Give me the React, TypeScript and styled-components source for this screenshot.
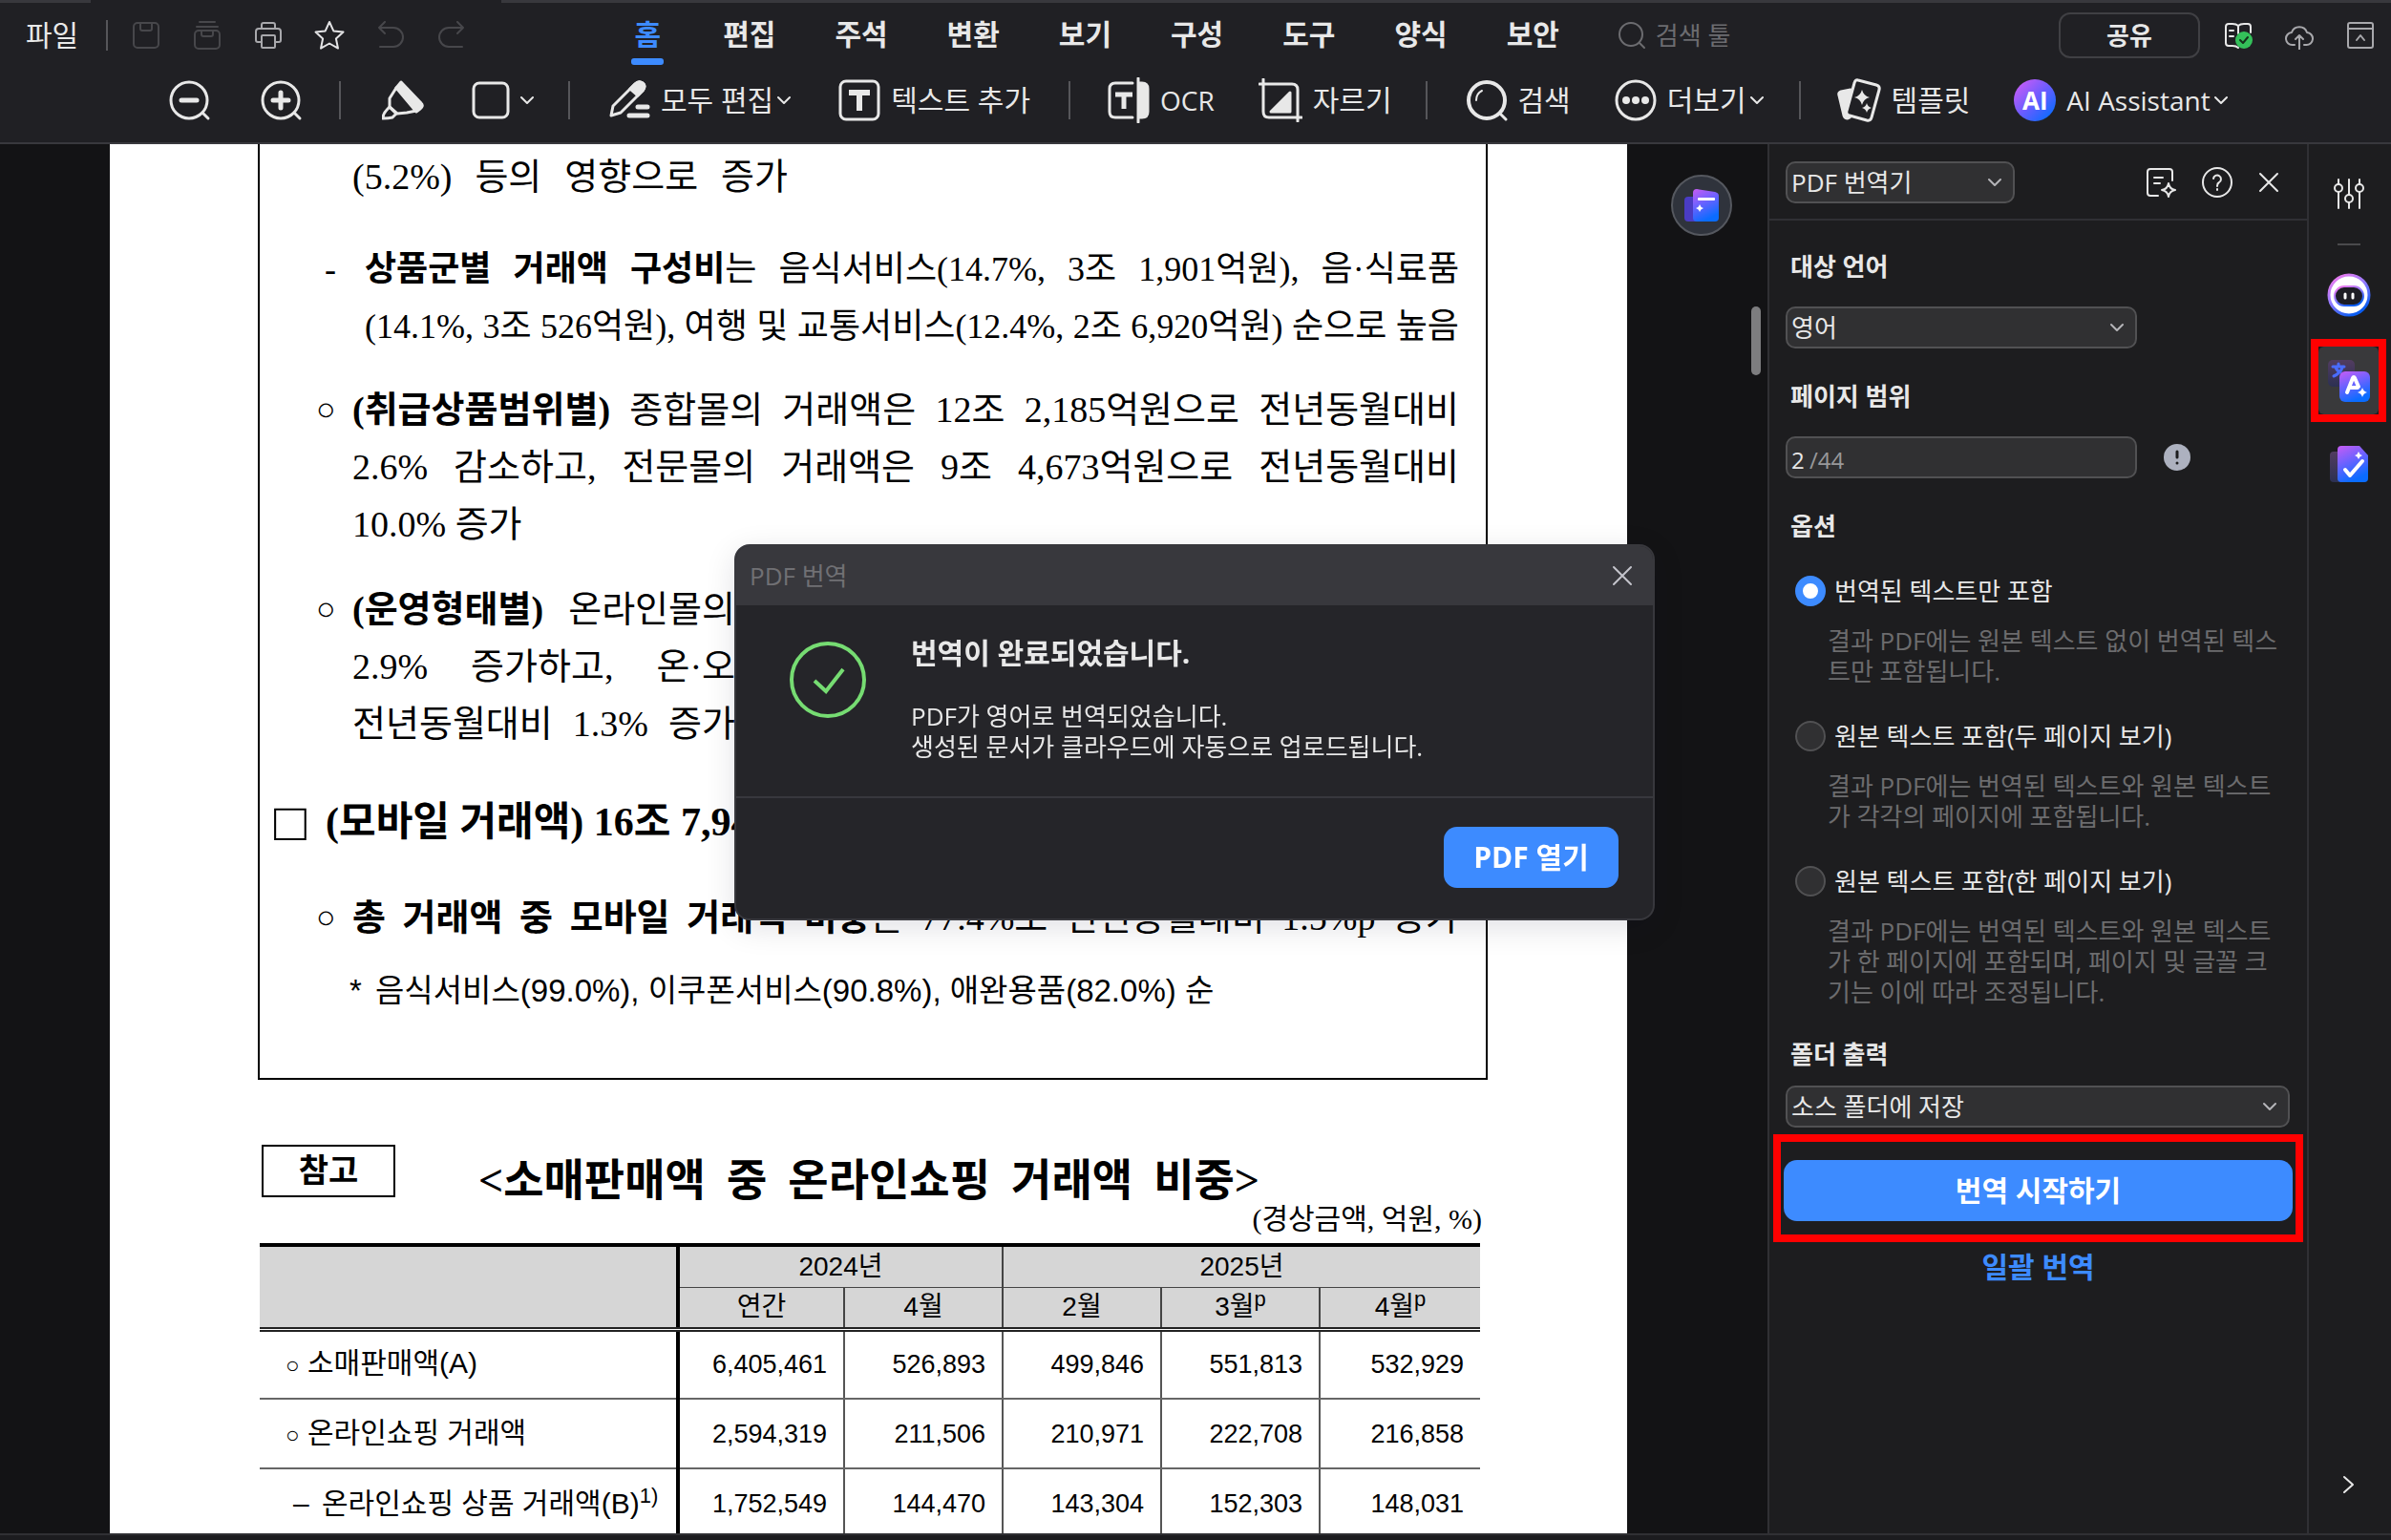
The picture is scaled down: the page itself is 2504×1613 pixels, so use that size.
import React from "react";
import styled, { createGlobalStyle, css } from "styled-components";

const uiFont = '"Open Sans", "Noto Sans CJK KR", sans-serif';
const serifFont = '"Liberation Serif", "Noto Sans CJK KR", serif';
const sansFont = '"Liberation Sans", "Noto Sans CJK KR", sans-serif';

const color = {
  bar: "#202024",
  line: "#38383d",
  panel: "#1d1d1f",
  canvas: "#131315",
  field: "#303032",
  fieldLine: "#515153",
  text: "#e8e8e8",
  muted: "#6c6c6e",
  blue: "#3d8bff",
  red: "#ff0000",
};

const GlobalStyle = createGlobalStyle`
  *, *::before, *::after { box-sizing: border-box; }
  body {
    margin: 0;
    background: ${color.canvas};
    color: ${color.text};
    font-family: ${uiFont};
    font-size: 26px;
    line-height: 32px;
  }
  button, input, select { font: inherit; color: inherit; }
  svg { display: block; flex: none; }
  p, h1, h2 { margin: 0; font: inherit; }
`;

const Shell = styled.div`
  display: flex;
  flex-direction: column;
  height: 100vh;
  overflow: hidden;
`;

/* ---------- header ---------- */

const Header = styled.header`
  flex: none;
  background: ${color.bar};
  border-bottom: 2px solid ${color.line};
  padding-bottom: 10px;
`;

const TabStrip = styled.div`
  display: flex;
  height: 3px;
  background: ${color.line};
  padding-left: 95px;
`;

const ActiveTab = styled.div`
  width: 430px;
  background: ${color.bar};
`;

const MenuRow = styled.div`
  display: flex;
  align-items: center;
  height: 68px;
  padding: 0 17px 0 27px;
`;

const PlainButton = styled.button`
  display: flex;
  align-items: center;
  justify-content: center;
  padding: 0;
  border: 0;
  background: none;
  white-space: nowrap;
`;

const FileButton = styled(PlainButton)`
  font-size: 30px;
  line-height: 40px;
`;

const Divider = styled.span<{ $height: number; $gap: string }>`
  flex: none;
  width: 2px;
  height: ${(p) => p.$height}px;
  margin: ${(p) => p.$gap};
  background: #56565a;
`;

const QuickButton = styled(PlainButton)<{ $tone: string }>`
  width: 64px;
  height: 40px;
  color: ${(p) => p.$tone};
`;

const Nav = styled.nav`
  display: flex;
  margin-left: 125px;
`;

const NavLink = styled.a<{ $active?: boolean }>`
  display: flex;
  flex-direction: column;
  align-items: center;
  padding: 0 31px;
  font-size: 30px;
  font-weight: 700;
  line-height: 50px;
  height: 60px;
  margin-top: 8px;
  text-decoration: none;
  color: ${(p) => (p.$active ? color.blue : color.text)};
  &::after {
    content: "";
    width: 34px;
    height: 7px;
    border-radius: 3px;
    background: ${(p) => (p.$active ? color.blue : "transparent")};
  }
`;

const SearchBox = styled.label`
  display: flex;
  align-items: center;
  gap: 10px;
  margin-left: 30px;
  color: #6c6c70;
`;

const SearchInput = styled.input`
  width: 130px;
  padding: 0;
  border: 0;
  background: none;
  outline: 0;
  &::placeholder {
    color: #6c6c70;
    opacity: 1;
  }
`;

const RightTools = styled.div`
  display: flex;
  align-items: center;
  gap: 34px;
  margin-left: auto;
`;

const ShareButton = styled(PlainButton)`
  width: 148px;
  height: 48px;
  margin-right: -9px;
  border: 2px solid #404044;
  border-radius: 12px;
  font-weight: 700;
`;

const ToolRow = styled.div`
  display: flex;
  align-items: center;
  height: 68px;
  padding-left: 177px;
`;

const ToolGroup = styled.div<{ $gap?: number }>`
  display: flex;
  align-items: center;
  gap: ${(p) => p.$gap ?? 46}px;
`;

const Tool = styled(PlainButton)`
  gap: 11px;
  height: 52px;
  font-size: 30px;
  line-height: 40px;
`;

const LatinTool = styled(Tool)`
  font-size: 28px;
`;

const Caret = styled.span`
  margin-left: -7px;
`;

const AiBadge = styled.span`
  display: grid;
  place-items: center;
  width: 44px;
  height: 44px;
  border-radius: 50%;
  background: linear-gradient(135deg, #d05cf5 5%, #6a5cff 50%, #0a6cff 90%);
  color: #fff;
  font-size: 26px;
  font-weight: 700;
`;

/* ---------- body ---------- */

const Body = styled.div`
  flex: 1;
  display: flex;
  min-height: 0;
`;

const Workspace = styled.main`
  position: relative;
  flex: 1;
  min-width: 0;
  overflow: hidden;
  padding: 0 147px 0 115px;
`;

const FloatingButton = styled.button`
  position: absolute;
  top: 32px;
  right: 37px;
  display: grid;
  place-items: center;
  width: 64px;
  height: 64px;
  padding: 0;
  border: 2px solid #55585f;
  border-radius: 50%;
  background: #2f333c;
`;

const ScrollThumb = styled.span`
  position: absolute;
  top: 170px;
  right: 7px;
  width: 10px;
  height: 72px;
  border-radius: 5px;
  background: #7d7d7f;
`;

const Page = styled.article`
  min-height: 100%;
  padding: 0 146px 0 155px;
  background: #fff;
  color: #000;
  font-family: ${serifFont};
`;

const Summary = styled.section`
  padding: 4px 28px 61px 0;
  border: 2px solid #000;
  border-top: 0;
`;

const Para = styled.div<{ $indent: number; $hang: number; $size: number; $top: number; $sans?: boolean }>`
  display: grid;
  grid-template-columns: ${(p) => p.$hang}px 1fr;
  margin-top: ${(p) => p.$top}px;
  padding-left: ${(p) => p.$indent}px;
  font-size: ${(p) => p.$size}px;
  line-height: 60px;
  white-space: nowrap;
  ${(p) => p.$sans && css`font-family: ${sansFont};`}
`;

const Bullet = styled.span<{ $size?: number }>`
  font-size: ${(p) => (p.$size ? p.$size + "px" : "inherit")};
`;

const Line = styled.span<{ $width?: number; $natural?: boolean }>`
  display: block;
  width: ${(p) => (p.$width ? p.$width + "px" : "auto")};
  text-align-last: ${(p) => (p.$natural ? "left" : "justify")};
`;

const TitleRow = styled.div`
  display: flex;
  align-items: flex-start;
  margin: 68px 0 0 4px;
`;

const RefTag = styled.span`
  width: 140px;
  border: 2px solid #000;
  font-family: ${sansFont};
  font-size: 34px;
  font-weight: 700;
  line-height: 51px;
  text-align: center;
`;

const TableTitle = styled.h1`
  width: 818px;
  margin: 13px 0 0 87px;
  font-size: 46px;
  font-weight: 700;
  line-height: 50px;
  text-align-last: justify;
  white-space: nowrap;
`;

const Unit = styled.p`
  margin: 0 6px 10px 0;
  font-size: 30px;
  line-height: 30px;
  text-align: right;
`;

const TableWrap = styled.div`
  padding: 0 8px 0 2px;
`;

const Table = styled.table`
  width: 100%;
  table-layout: fixed;
  border-collapse: collapse;
  border-top: 4px solid #000;
  font-family: ${sansFont};
  font-size: 30px;
  line-height: 36px;
  thead {
    background: #d6d6d6;
    border-bottom: 5px double #222;
  }
`;

const Th = styled.th`
  height: 44px;
  padding: 0;
  border: 1px solid #444;
  border-right-width: 2px;
  font-size: 28px;
  font-weight: 400;
  &:last-child { border-right: 0; }
`;

const CornerTh = styled(Th)`
  border: 0;
  border-right: 4px solid #000;
`;

const RowTh = styled.th<{ $indent: number }>`
  height: 73px;
  padding: 0 0 0 ${(p) => p.$indent}px;
  border-right: 4px solid #000;
  border-bottom: 2px solid #666;
  font-weight: 400;
  text-align: left;
  white-space: pre;
`;

const Td = styled.td`
  padding: 0 17px 0 0;
  border-right: 2px solid #555;
  border-bottom: 2px solid #666;
  font-size: 27px;
  text-align: right;
  &:last-child { border-right: 0; }
`;

const Sup = styled.sup`
  font-size: 22px;
  line-height: 0;
`;

const RowMark = styled.span<{ $width: number; $size: number }>`
  display: inline-block;
  width: ${(p) => p.$width}px;
  font-size: ${(p) => p.$size}px;
`;

/* ---------- side panel ---------- */

const Panel = styled.aside`
  flex: none;
  width: 565px;
  border-left: 2px solid #303034;
  background: ${color.panel};
`;

const PanelHead = styled.div`
  display: flex;
  align-items: center;
  gap: 27px;
  height: 80px;
  padding: 2px 29px 0 17px;
  border-bottom: 2px solid #303034;
`;

const Grow = styled.span`
  flex: 1;
`;

const SelectWrap = styled.span<{ $width?: number }>`
  position: relative;
  display: block;
  width: ${(p) => (p.$width ? p.$width + "px" : "100%")};
  svg {
    position: absolute;
    top: 15px;
    right: 14px;
    color: #b4b4b8;
    pointer-events: none;
  }
`;

const Select = styled.select`
  appearance: none;
  display: block;
  width: 100%;
  height: 44px;
  padding: 0 40px 0 4px;
  border: 2px solid ${color.fieldLine};
  border-radius: 10px;
  background: ${color.field};
`;

const Form = styled.form`
  padding-top: 32px;
`;

const Section = styled.div<{ $gap: number; $bottom: number }>`
  display: flex;
  flex-direction: column;
  gap: ${(p) => p.$gap}px;
  padding: 0 18px ${(p) => p.$bottom}px 17px;
`;

const Caption = styled.label`
  padding-left: 5px;
  font-weight: 700;
`;

const RangeRow = styled.div`
  display: flex;
  align-items: center;
  gap: 28px;
`;

const RangeField = styled.span`
  display: flex;
  align-items: center;
  gap: 5px;
  width: 368px;
  height: 44px;
  padding: 5px 4px 0;
  border: 2px solid ${color.fieldLine};
  border-radius: 10px;
  background: ${color.field};
  font-size: 24px;
  color: #98989a;
`;

const PageInput = styled.input`
  width: 14px;
  padding: 0;
  border: 0;
  outline: 0;
  background: none;
  color: ${color.text};
`;

const Option = styled.div`
  padding: 0 6px 0 10px;
  margin-bottom: 36px;
  &:last-child { margin-bottom: 0; }
`;

const OptionLabel = styled.label`
  display: flex;
  gap: 9px;
`;

const Radio = styled.input`
  appearance: none;
  flex: none;
  width: 32px;
  height: 32px;
  margin: 0;
  border: 2px solid ${color.fieldLine};
  border-radius: 50%;
  background: ${color.field};
  &:checked {
    border: 8px solid ${color.blue};
    background: #fff;
  }
`;

const OptionHint = styled.p`
  margin: 20px 0 0 34px;
  color: ${color.muted};
  white-space: nowrap;
`;

const Highlight = styled.div`
  margin: 0 4px;
  padding: 19px 3px 14px;
  border: 8px solid ${color.red};
`;

const Primary = styled.button`
  display: block;
  padding: 0;
  border: 0;
  border-radius: 14px;
  background: ${color.blue};
  color: #fff;
  font-size: 30px;
  font-weight: 700;
  line-height: 64px;
`;

const StartButton = styled(Primary)`
  width: 100%;
`;

const BatchLink = styled.a`
  display: block;
  margin-top: 6px;
  font-size: 30px;
  font-weight: 700;
  line-height: 40px;
  text-align: center;
  text-decoration: none;
  color: ${color.blue};
`;

const Rail = styled.aside`
  flex: none;
  display: flex;
  flex-direction: column;
  align-items: center;
  width: 88px;
  padding: 28px 3px 41px 0;
  border-left: 2px solid #303034;
  background: ${color.panel};
`;

const RailButton = styled(PlainButton)<{ $top?: number }>`
  width: 48px;
  height: 48px;
  margin-top: ${(p) => p.$top ?? 0}px;
`;

const RailLine = styled.span`
  width: 24px;
  height: 2px;
  margin-top: 28px;
  background: #4a4a4c;
`;

const RailHighlight = styled.div`
  margin-top: 22px;
  border: 8px solid ${color.red};
`;

const ActiveRailButton = styled(PlainButton)`
  width: 63px;
  height: 71px;
  border-radius: 6px;
  background: #39393b;
`;

const StatusBar = styled.footer`
  flex: none;
  height: 7px;
  border-top: 2px solid #303034;
  background: #1c1c1f;
`;

/* ---------- dialog ---------- */

const Overlay = styled.div`
  position: fixed;
  inset: 0;
  display: grid;
  place-items: center;
  padding: 0 2px 80px 0;
`;

const Dialog = styled.section`
  width: 964px;
  border: 2px solid ${color.line};
  border-radius: 16px;
  background: #252529;
  box-shadow: 0 8px 32px rgba(0, 0, 40, 0.12);
  overflow: hidden;
`;

const DialogHead = styled.div`
  display: flex;
  align-items: center;
  justify-content: space-between;
  height: 62px;
  padding: 0 21px 0 14px;
  background: ${color.line};
  color: #707074;
`;

const DialogBody = styled.div`
  display: flex;
  gap: 47px;
  height: 202px;
  padding: 30px 56px 0;
  border-bottom: 2px solid ${color.line};
`;

const DialogTitle = styled.h2`
  margin-bottom: 30px;
  font-size: 30px;
  font-weight: 700;
  line-height: 40px;
`;

const DialogIcon = styled.span`
  padding-top: 8px;
`;

const DialogFoot = styled.div`
  display: flex;
  justify-content: flex-end;
  height: 126px;
  padding: 30px 36px 0;
`;

const OpenButton = styled(Primary)`
  width: 183px;
  height: 64px;
`;

/* ---------- icons ---------- */

type IconProps = { size?: number; w?: number; box?: string; sw?: number; children: React.ReactNode };

const Icon = ({ size = 44, w, box, sw = 3, children }: IconProps) => (
  <svg
    width={w ?? size}
    height={size}
    viewBox={box ?? `0 0 ${w ?? size} ${size}`}
    fill="none"
    stroke="currentColor"
    strokeWidth={sw}
    strokeLinecap="round"
    strokeLinejoin="round"
    aria-hidden="true"
  >
    {children}
  </svg>
);

const Chevron = ({ w = 14 }: { w?: number }) => (
  <Icon size={14} w={w} box="0 0 14 14" sw={2}><path d="M1 4l6 6 6-6" /></Icon>
);

const Close = () => <Icon size={22} sw={2}><path d="M2 2l18 18M20 2L2 20" /></Icon>;

const Spark = ({ x, y, r, fill = "currentColor" }: { x: number; y: number; r: number; fill?: string }) => (
  <path
    stroke="none"
    fill={fill}
    d={`M${x} ${y - r}Q${x + r / 5} ${y - r / 5} ${x + r} ${y}Q${x + r / 5} ${y + r / 5} ${x} ${y + r}Q${x - r / 5} ${y + r / 5} ${x - r} ${y}Q${x - r / 5} ${y - r / 5} ${x} ${y - r}Z`}
  />
);

const GradientDefs = styled.svg`
  position: absolute;
  width: 0;
  height: 0;
`;

const Gradients = () => (
  <GradientDefs aria-hidden="true">
    <defs>
      <linearGradient id="violetBlue" x1="0" y1="0" x2="0.4" y2="1">
        <stop offset="0" stopColor="#c85cf5" />
        <stop offset="0.5" stopColor="#6a62ff" />
        <stop offset="1" stopColor="#0a6cff" />
      </linearGradient>
      <linearGradient id="pinkBlue" x1="0" y1="0" x2="0.6" y2="1">
        <stop offset="0" stopColor="#ff7ae8" />
        <stop offset="0.5" stopColor="#9a7cff" />
        <stop offset="1" stopColor="#0a5cf0" />
      </linearGradient>
      <linearGradient id="dimViolet" x1="0" y1="0" x2="0" y2="1">
        <stop offset="0" stopColor="#523c60" />
        <stop offset="1" stopColor="#2c3052" />
      </linearGradient>
    </defs>
  </GradientDefs>
);

const quick = [
  { name: "저장", tone: "#47474b", icon: <Icon size={30} sw={2}><rect x="2" y="2" width="26" height="26" rx="4" /><path d="M9 2v6q0 2 2 2h8q2 0 2-2V2" /></Icon> },
  { name: "모두 저장", tone: "#47474b", icon: <Icon size={30} sw={2}><path d="M7 1h16M4 6h22" /><rect x="2" y="10" width="26" height="19" rx="4" /><path d="M9 10v4q0 2 2 2h8q2 0 2-2v-4" /></Icon> },
  { name: "인쇄", tone: "#a8a8ac", icon: <Icon size={30} sw={2}><path d="M8 8V4q0-2 2-2h10q2 0 2 2v4M8 22H4q-2 0-2-2V11q0-3 3-3h20q3 0 3 3v9q0 2-2 2h-4" /><rect x="8" y="15" width="14" height="13" rx="1" /></Icon> },
  { name: "즐겨찾기", tone: "#e4e4e6", icon: <Icon size={32} sw={2}><path d="M16 2l4.300 9.400 10.200 1.200-7.600 6.900 2.100 10.100-9-5.100-9 5.100 2.100-10.100L1.500 12.600l10.200-1.200z" /></Icon> },
  { name: "실행 취소", tone: "#47474b", icon: <Icon size={30} sw={2}><path d="M9 1L3 7l6 6M3 7h15a10 10 0 0 1 0 20H4" /></Icon> },
  { name: "다시 실행", tone: "#47474b", icon: <Icon size={30} sw={2}><path d="M21 1l6 6-6 6M27 7H12a10 10 0 0 0 0 20h14" /></Icon> },
];

const menus = ["홈", "편집", "주석", "변환", "보기", "구성", "도구", "양식", "보안"];

const ZoomGlyph = ({ plus }: { plus?: boolean }) => (
  <Icon>
    <circle cx="21" cy="22" r="19" />
    <path d="M36 36l5 5" />
    <path strokeWidth="5" d={plus ? "M13 22h16M21 14v16" : "M13 22h16"} />
  </Icon>
);

const options = [
  { title: "번역된 텍스트만 포함", hint: ["결과 PDF에는 원본 텍스트 없이 번역된 텍스", "트만 포함됩니다."] },
  { title: "원본 텍스트 포함(두 페이지 보기)", hint: ["결과 PDF에는 번역된 텍스트와 원본 텍스트", "가 각각의 페이지에 포함됩니다."] },
  { title: "원본 텍스트 포함(한 페이지 보기)", hint: ["결과 PDF에는 번역된 텍스트와 원본 텍스트", "가 한 페이지에 포함되며, 페이지 및 글꼴 크", "기는 이에 따라 조정됩니다."] },
];

const rows = [
  { mark: "○", indent: 27, width: 23, size: 24, name: "소매판매액(A)", values: ["6,405,461", "526,893", "499,846", "551,813", "532,929"] },
  { mark: "○", indent: 27, width: 23, size: 24, name: "온라인쇼핑 거래액", values: ["2,594,319", "211,506", "210,971", "222,708", "216,858"] },
  { mark: "–", indent: 35, width: 30, size: 30, name: "온라인쇼핑 상품 거래액(B)", note: "1)", values: ["1,752,549", "144,470", "143,304", "152,303", "148,031"] },
];

const AppHeader = () => (
  <Header>
    <TabStrip><ActiveTab /></TabStrip>
    <MenuRow>
      <FileButton>파일</FileButton>
      <Divider $height={32} $gap="0 8px 0 29px" />
      {quick.map((q) => (
        <QuickButton key={q.name} $tone={q.tone} aria-label={q.name}>{q.icon}</QuickButton>
      ))}
      <Nav>
        {menus.map((m, i) => <NavLink key={m} href="#" $active={i === 0}>{m}</NavLink>)}
      </Nav>
      <SearchBox>
        <Icon size={30} sw={2}><circle cx="14" cy="14" r="12" /><path d="M23 23l5 5" /></Icon>
        <SearchInput placeholder="검색 툴" aria-label="검색 툴" />
      </SearchBox>
      <RightTools>
        <ShareButton>공유</ShareButton>
        <PlainButton aria-label="읽기 모드">
          <Icon size={30} sw={2}>
            <path d="M15 5q-2-2-6-2H5Q2 3 2 6v17q0 3 3 3h4q4 0 6 2M15 5q2-2 6-2h4q3 0 3 3v6M15 5v8M6 10h4M6 16h4" />
            <circle cx="21" cy="20" r="9" fill="#34c05a" stroke="none" />
            <path stroke="#14301c" d="M17 20l3 3 5-6" />
          </Icon>
        </PlainButton>
        <PlainButton aria-label="클라우드">
          <Icon size={30} sw={2}>
            <g stroke="#a8a8ac"><path d="M10 25H8a6.500 6.500 0 0 1-1-13 8.500 8.500 0 0 1 16 0 6.500 6.500 0 0 1-1 13h-2M15 30V15M11 19l4-4 4 4" /></g>
          </Icon>
        </PlainButton>
        <PlainButton aria-label="리본 접기">
          <Icon size={30} sw={2}>
            <g stroke="#a8a8ac"><rect x="2" y="2" width="26" height="26" rx="2" /><path d="M2 8h26M11 20l4-5 4 5" /></g>
          </Icon>
        </PlainButton>
      </RightTools>
    </MenuRow>
    <ToolRow>
      <ToolGroup $gap={52}>
        <Tool aria-label="축소"><ZoomGlyph /></Tool>
        <Tool aria-label="확대"><ZoomGlyph plus /></Tool>
      </ToolGroup>
      <Divider $height={40} $gap="0 43px 0 38px" />
      <ToolGroup $gap={50}>
        <Tool aria-label="형광펜">
          <Icon>
            <path fill="currentColor" d="M20 3l21 22q3 3-1 6l-4 3L15 9z" />
            <path d="M15 9L8 20v9l8 7 10-1 10-2" />
            <path d="M6 31q-5 5-5 10 6 0 10-1l4-4-7-7z" />
          </Icon>
        </Tool>
        <Tool aria-label="도형">
          <Icon w={40}><rect x="2" y="4" width="36" height="36" rx="6" /></Icon>
          <Chevron />
        </Tool>
      </ToolGroup>
      <Divider $height={40} $gap="0 40px 0 36px" />
      <ToolGroup $gap={50}>
        <Tool>
          <Icon>
            <path d="M5 28L28 5q4-4 8-1t0 8L13 35 3 38z" />
            <path fill="currentColor" d="M23 10l5-5q4-4 8-1t0 8l-5 5z" />
            <path strokeWidth="5" d="M31 29h10M22 38h19" />
          </Icon>
          모두 편집
          <Caret><Chevron /></Caret>
        </Tool>
        <Tool>
          <Icon><rect x="2" y="2" width="40" height="40" rx="6" /><path strokeWidth="6" strokeLinecap="butt" d="M11 14h22M22 13v20" /></Icon>
          텍스트 추가
        </Tool>
      </ToolGroup>
      <Divider $height={40} $gap="0 39px 0 40px" />
      <ToolGroup>
        <LatinTool>
          <Icon size={48} w={44}>
            <path d="M26 6H8q-6 0-6 6v24q0 6 6 6h18M32 1v46" />
            <path fill="currentColor" d="M33 6h3q6 0 6 6v24q0 6-6 6h-3z" />
            <path strokeWidth="5" strokeLinecap="butt" d="M8 18h18M17 17v16" />
          </Icon>
          OCR
        </LatinTool>
        <Tool>
          <Icon size={46}>
            <path d="M1 6h34q6 0 6 6v33M5 1v34q0 6 6 6h34" />
            <path fill="currentColor" d="M33 15v20H13z" />
          </Icon>
          자르기
        </Tool>
      </ToolGroup>
      <Divider $height={40} $gap="0 40px 0 35px" />
      <ToolGroup>
        <Tool>
          <Icon><circle cx="22" cy="22" r="19" strokeWidth="4" /><path d="M37 37l5 5" /><path strokeWidth="2" d="M11 22q0-7 6-10" /></Icon>
          검색
        </Tool>
        <Tool>
          <Icon>
            <circle cx="22" cy="22" r="20" />
            <g fill="currentColor" stroke="none"><circle cx="12" cy="22" r="4" /><circle cx="22" cy="22" r="4" /><circle cx="32" cy="22" r="4" /></g>
          </Icon>
          더보기
          <Caret><Chevron /></Caret>
        </Tool>
      </ToolGroup>
      <Divider $height={40} $gap="0 38px 0 37px" />
      <ToolGroup>
        <Tool>
          <Icon size={46}>
            <path fill="currentColor" d="M14 12L4 14q-3 1-2 4l5 21q1 3 4 3l2-1-3-5z" />
            <path d="M22 2l19 5q4 1 3 5l-8 29q-1 4-5 3l-18-5q-4-1-3-5l8-29q1-4 4-3z" fill={color.bar} />
            <Spark x={26} y={20} r={8} />
            <Spark x={31} y={31} r={5} />
          </Icon>
          템플릿
        </Tool>
        <LatinTool>
          <AiBadge>AI</AiBadge>
          AI Assistant
          <Caret><Chevron /></Caret>
        </LatinTool>
      </ToolGroup>
    </ToolRow>
  </Header>
);

const DocumentView = () => (
  <Workspace>
    <Page>
      <Summary>
        <Para $indent={97} $hang={0} $size={38} $top={0}>
          <span /><Line $width={456}>(5.2%) 등의 영향으로 증가</Line>
        </Para>
        <Para $indent={68} $hang={42} $size={36} $top={37}>
          <Bullet>-</Bullet>
          <div>
            <Line><b>상품군별 거래액 구성비</b>는 음식서비스(14.7%, 3조 1,901억원), 음·식료품</Line>
            <Line>(14.1%, 3조 526억원), 여행 및 교통서비스(12.4%, 2조 6,920억원) 순으로 높음</Line>
          </div>
        </Para>
        <Para $indent={59} $hang={38} $size={38} $top={27}>
          <Bullet $size={34}>○</Bullet>
          <div>
            <Line><b>(취급상품범위별)</b> 종합몰의 거래액은 12조 2,185억원으로 전년동월대비</Line>
            <Line>2.6% 감소하고, 전문몰의 거래액은 9조 4,673억원으로 전년동월대비</Line>
            <Line $natural>10.0% 증가</Line>
          </div>
        </Para>
        <Para $indent={59} $hang={38} $size={38} $top={29}>
          <Bullet $size={34}>○</Bullet>
          <div>
            <Line $width={401}><b>(운영형태별)</b> 온라인몰의</Line>
            <Line $width={401}>2.9% 증가하고, 온·오</Line>
            <Line $width={401}>전년동월대비 1.3% 증가</Line>
          </div>
        </Para>
        <Para $indent={15} $hang={54} $size={42} $top={43}>
          <Bullet $size={56}>□</Bullet>
          <Line $natural><b>(모바일 거래액) 16조 7,94</b></Line>
        </Para>
        <Para $indent={59} $hang={38} $size={38} $top={40}>
          <Bullet $size={34}>○</Bullet>
          <Line><b>총 거래액 중 모바일 거래액 비중</b>은 77.4%로 전년동월대비 1.5%p 증가</Line>
        </Para>
        <Para $indent={94} $hang={27} $size={33} $top={17} $sans>
          <Bullet>*</Bullet>
          <Line $natural>음식서비스(99.0%), 이쿠폰서비스(90.8%), 애완용품(82.0%) 순</Line>
        </Para>
      </Summary>
      <TitleRow>
        <RefTag>참고</RefTag>
        <TableTitle>&lt;소매판매액 중 온라인쇼핑 거래액 비중&gt;</TableTitle>
      </TitleRow>
      <Unit>(경상금액, 억원, %)</Unit>
      <TableWrap>
        <Table>
          <colgroup>
            <col style={{ width: 438 }} />
            <col style={{ width: 174 }} />
            <col style={{ width: 166 }} />
            <col style={{ width: 166 }} />
            <col style={{ width: 166 }} />
            <col style={{ width: 168 }} />
          </colgroup>
          <thead>
            <tr>
              <CornerTh rowSpan={2} />
              <Th colSpan={2}>2024년</Th>
              <Th colSpan={3}>2025년</Th>
            </tr>
            <tr>
              <Th>연간</Th>
              <Th>4월</Th>
              <Th>2월</Th>
              <Th>3월<Sup>p</Sup></Th>
              <Th>4월<Sup>p</Sup></Th>
            </tr>
          </thead>
          <tbody>
            {rows.map((r) => (
              <tr key={r.name}>
                <RowTh scope="row" $indent={r.indent}>
                  <RowMark $width={r.width} $size={r.size}>{r.mark}</RowMark>
                  {r.name}
                  {r.note && <Sup>{r.note}</Sup>}
                </RowTh>
                {r.values.map((v) => <Td key={v}>{v}</Td>)}
              </tr>
            ))}
          </tbody>
        </Table>
      </TableWrap>
    </Page>
    <FloatingButton aria-label="AI 도구">
      <Icon size={36} sw={0}>
        <rect x="0" y="9" width="18" height="26" rx="4" fill="#4a3cc4" />
        <path fill="url(#violetBlue)" d="M13 1l19 3q4 1 4 4v23q0 4-4 4H13q-4 0-4-4V5q0-4 4-4z" />
        <rect x="14" y="10" width="18" height="3" rx="1" fill="#fff" />
        <Spark x={16} y={21} r={4} fill="#fff" />
      </Icon>
    </FloatingButton>
    <ScrollThumb />
  </Workspace>
);

const TranslatorPanel = () => (
  <Panel>
    <PanelHead>
      <SelectWrap $width={240}>
        <Select aria-label="도구"><option>PDF 번역기</option></Select>
        <Chevron />
      </SelectWrap>
      <Grow />
      <PlainButton aria-label="번역 기록">
        <Icon size={32} sw={2}>
          <path d="M28 14V5q0-3-3-3H5Q2 2 2 5v22q0 3 3 3h8M9 11h9M9 17h6" />
          <path d="M24 17q1 6 7 7-6 1-7 7-1-6-7-7 6-1 7-7z" />
        </Icon>
      </PlainButton>
      <PlainButton aria-label="도움말">
        <Icon size={32} sw={2}><circle cx="16" cy="16" r="15" /><path d="M12 12a4 4 0 1 1 6 4q-2 1-2 4M16 23v1" /></Icon>
      </PlainButton>
      <PlainButton aria-label="닫기"><Close /></PlainButton>
    </PanelHead>
    <Form>
      <Section $gap={26} $bottom={34}>
        <Caption htmlFor="target">대상 언어</Caption>
        <SelectWrap $width={368}>
          <Select id="target"><option>영어</option></Select>
          <Chevron />
        </SelectWrap>
      </Section>
      <Section $gap={26} $bottom={34}>
        <Caption htmlFor="range">페이지 범위</Caption>
        <RangeRow>
          <RangeField><PageInput id="range" defaultValue="2" /><span>/44</span></RangeField>
          <Icon size={28}>
            <circle cx="14" cy="14" r="14" fill="#adb1bf" stroke="none" />
            <path stroke="#1d1d1f" d="M14 8v6M14 20v0" />
          </Icon>
        </RangeRow>
      </Section>
      <Section $gap={36} $bottom={33}>
        <Caption as="span">옵션</Caption>
        <div>
          {options.map((o, i) => (
            <Option key={o.title}>
              <OptionLabel>
                <Radio type="radio" name="mode" defaultChecked={i === 0} />
                {o.title}
              </OptionLabel>
              <OptionHint>
                {o.hint.map((t) => <React.Fragment key={t}>{t}<br /></React.Fragment>)}
              </OptionHint>
            </Option>
          ))}
        </div>
      </Section>
      <Section $gap={17} $bottom={7}>
        <Caption htmlFor="folder">폴더 출력</Caption>
        <SelectWrap>
          <Select id="folder"><option>소스 폴더에 저장</option></Select>
          <Chevron />
        </SelectWrap>
      </Section>
      <Highlight>
        <StartButton type="button">번역 시작하기</StartButton>
      </Highlight>
      <BatchLink href="#">일괄 번역</BatchLink>
    </Form>
  </Panel>
);

const SideRail = () => (
  <Rail>
    <RailButton aria-label="설정">
      <Icon size={32} sw={2}>
        <path d="M5 1v5M5 14v17M16 1v16M16 25v6M27 1v5M27 14v17" />
        <circle cx="5" cy="10" r="4" /><circle cx="16" cy="21" r="4" /><circle cx="27" cy="10" r="4" />
      </Icon>
    </RailButton>
    <RailLine />
    <RailButton aria-label="AI 챗" $top={28}>
      <Icon size={46} sw={2}>
        <circle cx="23" cy="23" r="21" fill="#fff" stroke="url(#pinkBlue)" strokeWidth="3" />
        <rect x="8" y="14" width="30" height="20" rx="10" fill="#1d1d24" stroke="url(#pinkBlue)" />
        <path stroke="#fff" strokeWidth="3" d="M19 22v4M27 22v4" />
      </Icon>
    </RailButton>
    <RailHighlight>
      <ActiveRailButton aria-label="PDF 번역기">
        <Icon size={44} sw={0}>
          <rect x="0" y="0" width="28" height="28" rx="5" fill="url(#dimViolet)" />
          <path stroke="#4a6cff" strokeWidth="3" d="M5 7h12M11 4v3M15 8q-2 6-9 9M8 8q2 4 5 5" />
          <rect x="12" y="12" width="32" height="32" rx="6" fill="url(#violetBlue)" />
          <path stroke="#fff" strokeWidth="4" d="M20 34l6-15q1-2 2 0l4 9M23 29h8" />
          <Spark x={36} y={34} r={5} fill="#fff" />
        </Icon>
      </ActiveRailButton>
    </RailHighlight>
    <RailButton aria-label="문법 검사" $top={20}>
      <Icon size={40} sw={4}>
        <rect x="0" y="7" width="20" height="32" rx="4" fill="url(#dimViolet)" stroke="none" />
        <path stroke="none" fill="url(#violetBlue)" d="M12 1h19l9 10v24q0 4-4 4H12q-4 0-4-4V5q0-4 4-4z" />
        <path stroke="#fff" d="M16 26l5 6 13-15" />
        <Spark x={30} y={11} r={4} fill="#fff" />
      </Icon>
    </RailButton>
    <Grow />
    <PlainButton aria-label="펼치기">
      <Icon size={20} w={14} sw={2}><path d="M2 2l9 8-9 8" /></Icon>
    </PlainButton>
  </Rail>
);

const DoneDialog = () => (
  <Overlay>
    <Dialog role="dialog" aria-labelledby="done-title">
      <DialogHead>
        PDF 번역
        <PlainButton aria-label="대화 상자 닫기"><Icon size={22} sw={2}><path stroke="#c4c4cc" d="M2 2l18 18M20 2L2 20" /></Icon></PlainButton>
      </DialogHead>
      <DialogBody>
        <DialogIcon>
          <Icon size={80} sw={4}>
            <g stroke="#76dc72"><circle cx="40" cy="40" r="38" /><path strokeLinecap="butt" strokeLinejoin="miter" d="M26 41l12 11 18-23" /></g>
          </Icon>
        </DialogIcon>
        <div>
          <DialogTitle id="done-title">번역이 완료되었습니다.</DialogTitle>
          <p>PDF가 영어로 번역되었습니다.</p>
          <p>생성된 문서가 클라우드에 자동으로 업로드됩니다.</p>
        </div>
      </DialogBody>
      <DialogFoot><OpenButton>PDF 열기</OpenButton></DialogFoot>
    </Dialog>
  </Overlay>
);

export default function App() {
  return (
    <>
      <GlobalStyle />
      <Gradients />
      <Shell>
        <AppHeader />
        <Body>
          <DocumentView />
          <TranslatorPanel />
          <SideRail />
        </Body>
        <StatusBar />
      </Shell>
      <DoneDialog />
    </>
  );
}
